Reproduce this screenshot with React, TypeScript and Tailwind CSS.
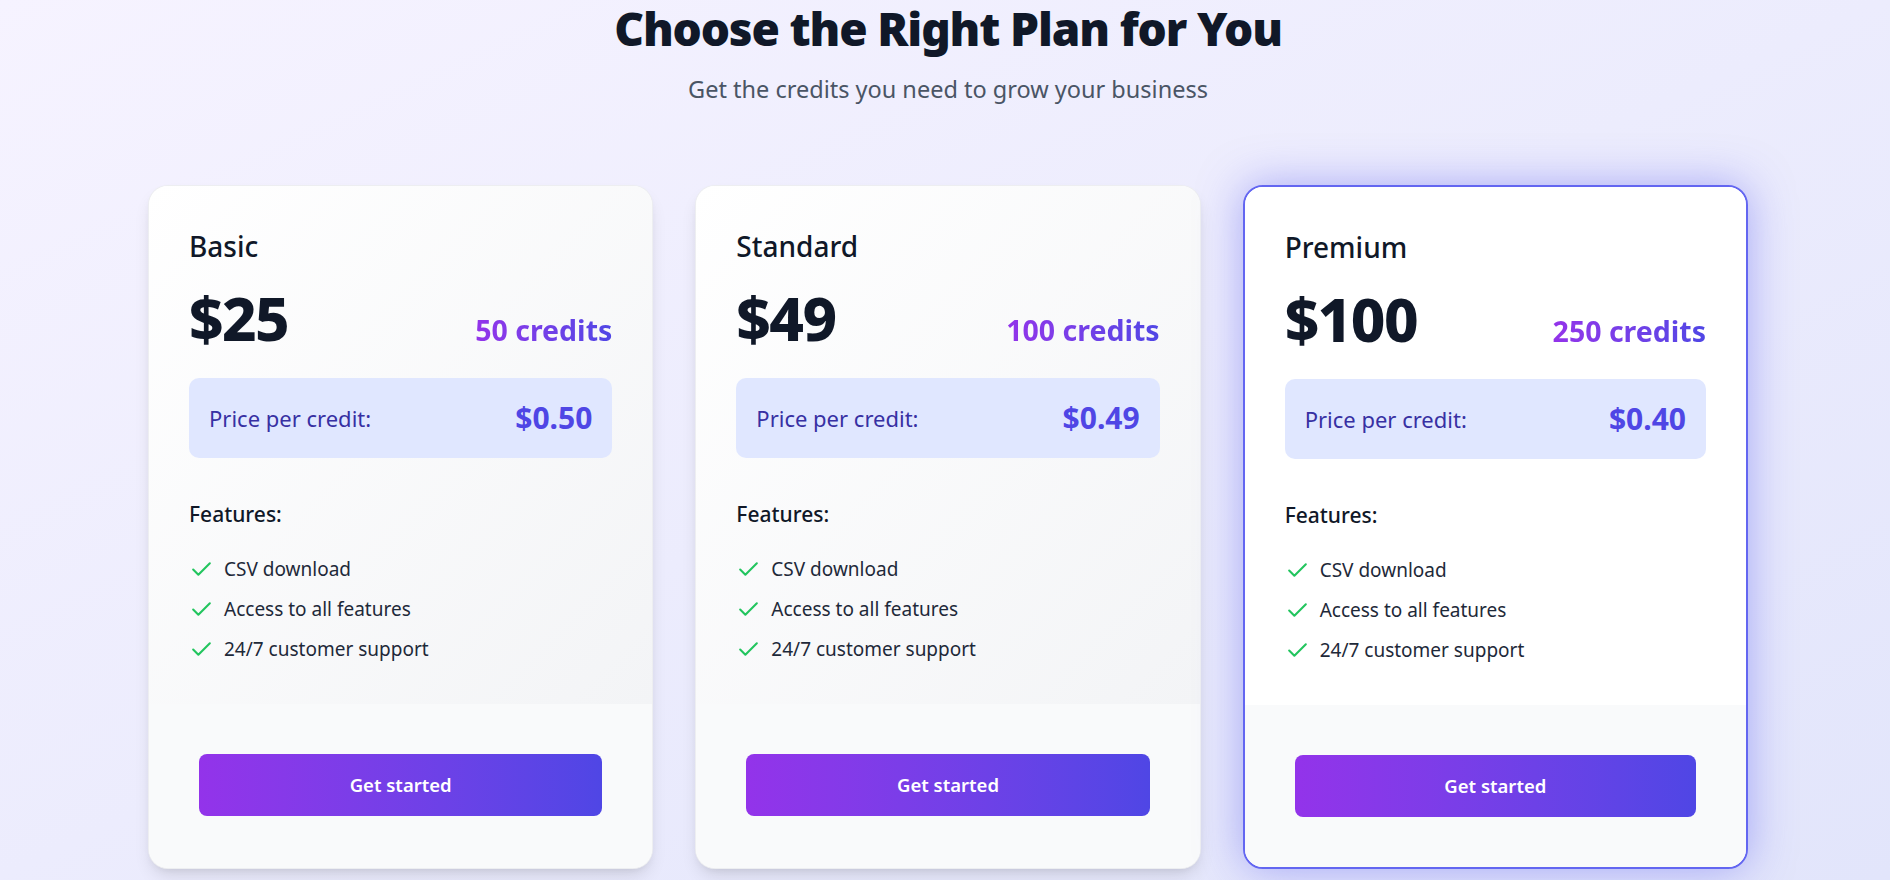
import React from 'react'

// Pricing plans — three cards, the last one highlighted
const plans = [
  { name: 'Basic', price: '$25', credits: '50 credits', perCredit: '$0.50', featured: false },
  { name: 'Standard', price: '$49', credits: '100 credits', perCredit: '$0.49', featured: false },
  { name: 'Premium', price: '$100', credits: '250 credits', perCredit: '$0.40', featured: true },
]

const features = ['CSV download', 'Access to all features', '24/7 customer support']

function CheckIcon() {
  return (
    <svg width="25" height="25" viewBox="0 0 24 24" fill="none" stroke="currentColor" strokeWidth="2" strokeLinecap="round" strokeLinejoin="round" className="text-[#22c55e] shrink-0">
      <path d="M20 6 9 17l-5-5" />
    </svg>
  )
}

function PlanCard({ plan }: { plan: (typeof plans)[number] }) {
  return (
    <div
      className={`flex flex-col rounded-[20px] overflow-hidden ${plan.featured
          ? 'border-2 border-[#6366f1] bg-white shadow-[0_0_44px_rgba(99,102,241,0.5)]'
          : 'border border-gray-200/70 bg-white shadow-[0_10px_18px_-4px_rgba(0,0,0,0.12),0_4px_8px_-4px_rgba(0,0,0,0.08)]'
        }`}
    >
      {/* Top section */}
      <div className={`p-[40px] ${plan.featured ? 'bg-white' : 'bg-linear-to-br from-white to-gray-100'}`}>
        <h3 className="text-[28px] leading-[40px] font-medium text-gray-900">{plan.name}</h3>

        <div className="mt-[22px] flex items-baseline justify-between">
          <span className="text-[60px] leading-[60px] font-extrabold text-gray-900 tracking-tight">{plan.price}</span>
          <span className="text-[28.5px] leading-[40px] font-bold bg-linear-to-r from-[#9333ea] to-[#4f46e5] bg-clip-text text-transparent">
            {plan.credits}
          </span>
        </div>

        <div className="mt-[28px] flex items-center justify-between rounded-[10px] bg-[#e0e7ff] p-[20px]">
          <span className="text-[22px] leading-[40px] text-[#3730a3]">Price per credit:</span>
          <span className="text-[30px] leading-[40px] font-bold text-[#4f46e5]">{plan.perCredit}</span>
        </div>

        <h4 className="mt-[39px] text-[21px] leading-[35px] font-medium text-gray-900">Features:</h4>
        <ul className="mt-[22px] flex flex-col gap-[10px]">
          {features.map((f) => (
            <li key={f} className="flex items-center gap-[10px]">
              <CheckIcon />
              <span className="text-[19px] leading-[30px] text-gray-800">{f}</span>
            </li>
          ))}
        </ul>
      </div>

      {/* Footer */}
      <div className="flex-1 bg-gray-50 p-[50px]">
        <button className="w-full rounded-[8px] bg-linear-to-r from-[#9333ea] to-[#4f46e5] py-[16px] text-[18.5px] leading-[30px] font-semibold text-white">
          Get started
        </button>
      </div>
    </div>
  )
}

export default function App() {
  return (
    <div
      className="min-h-screen w-full bg-linear-to-br from-[#f6f3ff] to-[#e2e5fb] flex flex-col items-center pl-[6px]"
      style={{ fontFamily: '"Noto Sans", "Open Sans", sans-serif' }}
    >
      <h1 className="text-[46px] leading-[56px] font-black text-gray-900 tracking-tight">
        Choose the Right Plan for You
      </h1>
      <p className="mt-[16px] text-[23.5px] leading-[35px] text-gray-600">
        Get the credits you need to grow your business
      </p>

      <div className="mt-[78px] grid w-[1600px] grid-cols-3 gap-[42px]">
        {plans.map((p) => (
          <PlanCard key={p.name} plan={p} />
        ))}
      </div>
    </div>
  )
}
